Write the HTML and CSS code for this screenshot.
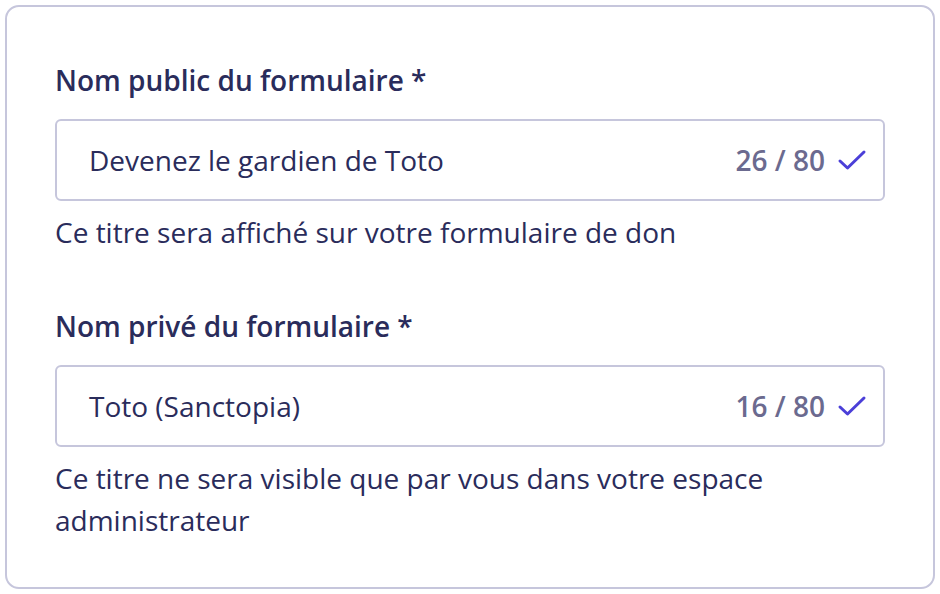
FILE: index.html
```html
<!DOCTYPE html>
<html lang="fr">
<head>
<meta charset="utf-8">
<link rel="stylesheet" href="styles.css">
</head>
<body>
<div class="card">
  <div class="field">
    <label class="label">Nom public du formulaire *</label>
    <div class="input">
      <span class="value">Devenez le gardien de Toto</span>
      <span class="meta"><span class="count">26 / 80</span>
        <svg class="check" width="30" height="22" viewBox="0 0 30 22"><path d="M3 12 L10.5 19 L27 3" fill="none" stroke="#4b3fd8" stroke-width="3" stroke-linecap="round" stroke-linejoin="round"/></svg>
      </span>
    </div>
    <p class="help">Ce titre sera affiché sur votre formulaire de don</p>
  </div>
  <div class="field second">
    <label class="label">Nom privé du formulaire *</label>
    <div class="input">
      <span class="value">Toto (Sanctopia)</span>
      <span class="meta"><span class="count">16 / 80</span>
        <svg class="check" width="30" height="22" viewBox="0 0 30 22"><path d="M3 12 L10.5 19 L27 3" fill="none" stroke="#4b3fd8" stroke-width="3" stroke-linecap="round" stroke-linejoin="round"/></svg>
      </span>
    </div>
    <p class="help">Ce titre ne sera visible que par vous dans votre espace administrateur</p>
  </div>
</div>
</body>
</html>
```
FILE: styles.css
```css
html, body {
  margin: 0;
  padding: 0;
  background: #ffffff;
}
body {
  font-family: "Open Sans", "Noto Sans", sans-serif;
  color: #2a2c5b;
}
.card {
  margin: 5px;
  width: 930px;
  height: 584px;
  box-sizing: border-box;
  border: 2px solid #c6c6dc;
  border-radius: 14px;
  padding: 57px 48px 0 48px;
}
.field.second {
  margin-top: 57px;
}
.label {
  display: block;
  font-size: 28px;
  font-weight: 600;
  line-height: 32px;
  color: #2a2c5b;
}
.input {
  margin-top: 23px;
  height: 82px;
  box-sizing: border-box;
  border: 2px solid #c6c6dc;
  border-radius: 6px;
  display: flex;
  align-items: center;
  justify-content: space-between;
  padding: 0 16px 0 32px;
}
.value {
  font-size: 28px;
  color: #2a2c5b;
}
.meta {
  display: flex;
  align-items: center;
  gap: 12px;
}
.count {
  font-size: 28px;
  font-weight: 600;
  color: #6b6a8f;
}
.check {
  display: block;
}
.help {
  margin: 10px 0 0 0;
  font-size: 28px;
  line-height: 42px;
  color: #2a2c5b;
  width: 740px;
}
```
